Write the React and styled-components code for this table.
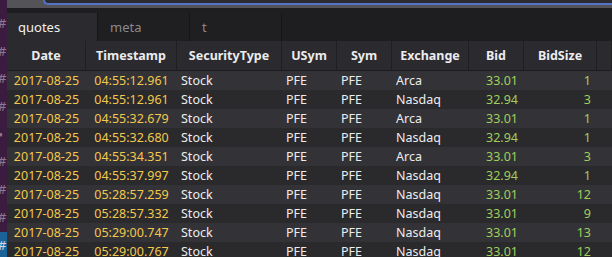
import styled, { createGlobalStyle } from 'styled-components';

const GlobalStyle = createGlobalStyle`
  html, body {
    margin: 0;
    padding: 0;
    background: #1e1d20;
    overflow: hidden;
  }
  body {
    font-family: 'Noto Sans', 'Open Sans', sans-serif;
  }
`;

const COLUMNS = '79px 91px 105px 55px 55px 77px 55px 73px 1fr';

const headers = [
  'Date',
  'Timestamp',
  'SecurityType',
  'USym',
  'Sym',
  'Exchange',
  'Bid',
  'BidSize',
  '',
];

const rows = [
  ['04:55:12.961', 'Arca', '33.01', '1'],
  ['04:55:12.961', 'Nasdaq', '32.94', '3'],
  ['04:55:32.679', 'Arca', '33.01', '1'],
  ['04:55:32.680', 'Nasdaq', '32.94', '1'],
  ['04:55:34.351', 'Arca', '33.01', '3'],
  ['04:55:37.997', 'Nasdaq', '32.94', '1'],
  ['05:28:57.259', 'Nasdaq', '33.01', '12'],
  ['05:28:57.332', 'Nasdaq', '33.01', '9'],
  ['05:29:00.747', 'Nasdaq', '33.01', '13'],
  ['05:29:00.767', 'Nasdaq', '33.01', '12'],
];

const Page = styled.div`
  display: flex;
  width: 612px;
  height: 257px;
  overflow: hidden;
`;

const Sidebar = styled.div`
  width: 7px;
  flex-shrink: 0;
  background: #3b1b40;
  display: flex;
  flex-direction: column;
  padding-top: 10px;
  overflow: hidden;
`;

const SideMark = styled.div`
  flex-shrink: 0;
  height: 27.7px;
  line-height: 27.7px;
  margin-left: -2px;
  font-size: 13px;
  background: ${({ $active }) => ($active ? '#1b6299' : 'transparent')};
  color: ${({ $active }) => ($active ? '#cfd8e6' : '#8d7a92')};
`;

const Main = styled.div`
  flex: 1;
  display: flex;
  flex-direction: column;
  min-width: 0;
  overflow: hidden;
`;

const TopBar = styled.div`
  flex-shrink: 0;
  height: 8px;
  background: #545357;
  display: flex;
`;

const SearchBox = styled.div`
  margin-left: 36px;
  flex: 1;
  height: 3px;
  background: #2c2b30;
  border: 2px solid #5572c9;
  border-top: none;
  border-right: none;
  border-bottom-left-radius: 6px;
`;

const TabBar = styled.div`
  flex-shrink: 0;
  margin-top: 5px;
  height: 28px;
  display: flex;
  background: #1e1d20;
`;

const Tab = styled.div`
  width: ${({ $w }) => $w}px;
  box-sizing: border-box;
  padding-left: ${({ $active }) => ($active ? 11 : 12)}px;
  display: flex;
  align-items: center;
  font-size: 13px;
  background: ${({ $active }) => ($active ? '#2b2a2e' : '#1f1e21')};
  color: ${({ $active }) => ($active ? '#f0f0f0' : '#8a898d')};
  border-right: 1px solid #151417;
`;

const Table = styled.div`
  flex-shrink: 0;
  display: flex;
  flex-direction: column;
`;

const HeaderRow = styled.div`
  flex-shrink: 0;
  display: grid;
  grid-template-columns: ${COLUMNS};
  height: 29px;
  background: #2b2a2e;
  border-bottom: 1px solid #1c1b1e;
`;

const HeaderCell = styled.div`
  display: flex;
  align-items: center;
  justify-content: center;
  font-size: 12.5px;
  font-weight: 700;
  color: #ececee;
  border-right: 1px solid #1f1e21;
  white-space: nowrap;
  overflow: hidden;
`;

const Row = styled.div`
  flex-shrink: 0;
  display: grid;
  grid-template-columns: ${COLUMNS};
  height: 19px;
  background: ${({ $odd }) => ($odd ? '#2a292c' : '#333236')};
`;

const Cell = styled.div`
  display: flex;
  align-items: center;
  font-size: 12.5px;
  white-space: nowrap;
  overflow: hidden;
  justify-content: ${({ $align }) =>
    $align === 'right' ? 'flex-end' : $align === 'center' ? 'center' : 'flex-start'};
  padding: ${({ $align }) => ($align === 'right' ? '0 6px 0 0' : $align === 'center' ? '0' : '0 0 0 4px')};
  color: ${({ $kind }) =>
    $kind === 'date' ? '#f2c94c' : $kind === 'num' ? '#9fcf5c' : '#ededee'};
`;

export default function App() {
  const marks = ['#', '#', '#', '#', 'lock', '#', '#', '#', '#'];
  return (
    <Page>
      <GlobalStyle />
      <Sidebar>
        {marks.map((m, i) => (
          <SideMark key={i} $active={i === marks.length - 1}>
            {m === 'lock' ? '▪' : m}
          </SideMark>
        ))}
      </Sidebar>
      <Main>
        <TopBar>
          <SearchBox />
        </TopBar>
        <TabBar>
          <Tab $w={91} $active>quotes</Tab>
          <Tab $w={92}>meta</Tab>
          <Tab $w={92}>t</Tab>
        </TabBar>
        <Table>
          <HeaderRow>
            {headers.map((h, i) => (
              <HeaderCell key={i}>{h}</HeaderCell>
            ))}
          </HeaderRow>
          {rows.map(([time, exch, bid, size], i) => (
            <Row key={i} $odd={i % 2 === 1}>
              <Cell $kind="date" $align="center">2017-08-25</Cell>
              <Cell $kind="date" $align="center">{time}</Cell>
              <Cell>Stock</Cell>
              <Cell>PFE</Cell>
              <Cell>PFE</Cell>
              <Cell>{exch}</Cell>
              <Cell $kind="num" $align="right">{bid}</Cell>
              <Cell $kind="num" $align="right">{size}</Cell>
              <Cell />
            </Row>
          ))}
        </Table>
      </Main>
    </Page>
  );
}
